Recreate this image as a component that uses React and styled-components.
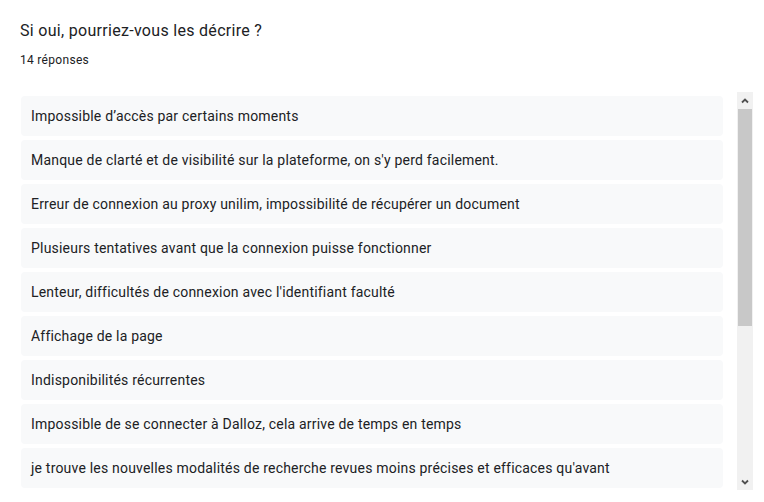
import React from "react";
import styled, { createGlobalStyle } from "styled-components";

const answers = [
  "Impossible d’accès par certains moments",
  "Manque de clarté et de visibilité sur la plateforme, on s'y perd facilement.",
  "Erreur de connexion au proxy unilim, impossibilité de récupérer un document",
  "Plusieurs tentatives avant que la connexion puisse fonctionner",
  "Lenteur, difficultés de connexion avec l'identifiant faculté",
  "Affichage de la page",
  "Indisponibilités récurrentes",
  "Impossible de se connecter à Dalloz, cela arrive de temps en temps",
  "je trouve les nouvelles modalités de recherche revues moins précises et efficaces qu'avant",
];

function Arrow({ down }) {
  return (
    <svg width="8" height="6" viewBox="0 0 8 6">
      <path
        d={down ? "M1 1.5 L4 4.5 L7 1.5" : "M1 4.5 L4 1.5 L7 4.5"}
        fill="none"
        stroke="#505050"
        strokeWidth="1.8"
      />
    </svg>
  );
}

function App() {
  return (
    <>
      <GlobalStyle />
      <Card>
        <Title>Si oui, pourriez-vous les décrire ?</Title>
        <Count>14 réponses</Count>
        <ScrollArea>
          <List>
            {answers.map((a, i) => (
              <Item key={i}>{a}</Item>
            ))}
          </List>
          <Scrollbar>
            <ScrollButton>
              <Arrow />
            </ScrollButton>
            <Track>
              <Thumb />
            </Track>
            <ScrollButton>
              <Arrow down />
            </ScrollButton>
          </Scrollbar>
        </ScrollArea>
      </Card>
    </>
  );
}

const GlobalStyle = createGlobalStyle`
  body {
    margin: 0;
    background: #fff;
    font-family: Roboto, "Liberation Sans", sans-serif;
    color: #202124;
  }
`;

const Card = styled.div`
  width: 764px;
  height: 502px;
  box-sizing: border-box;
  padding: 19px 11px 0 20px;
  background: #fff;
  overflow: hidden;
`;

const Title = styled.div`
  font: 400 16px/24px Roboto, "Liberation Sans", sans-serif;
  letter-spacing: 0.3px;
  color: #202124;
`;

const Count = styled.div`
  margin-top: 9px;
  font: 400 12px/16px Roboto, "Liberation Sans", sans-serif;
  letter-spacing: 0.3px;
  color: #202124;
`;

const ScrollArea = styled.div`
  display: flex;
  margin-top: 24px;
  margin-left: 1px;
  height: 398px;
  gap: 14px;
`;

const List = styled.div`
  flex: 1;
  display: flex;
  flex-direction: column;
  gap: 4px;
  padding-top: 4px;
  overflow: hidden;
`;

const Item = styled.div`
  flex-shrink: 0;
  height: 40px;
  box-sizing: border-box;
  display: flex;
  align-items: center;
  padding: 0 10px;
  background: #f8f9fa;
  border-radius: 4px;
  font: 400 14px/20px Roboto, "Liberation Sans", sans-serif;
  letter-spacing: 0.2px;
  color: #202124;
  white-space: nowrap;
`;

const Scrollbar = styled.div`
  width: 16px;
  display: flex;
  flex-direction: column;
  background: #f1f1f1;
`;

const ScrollButton = styled.div`
  height: 17px;
  display: flex;
  align-items: center;
  justify-content: center;
  flex-shrink: 0;
`;

const Track = styled.div`
  flex: 1;
  padding: 0 1px;
`;

const Thumb = styled.div`
  height: 217px;
  background: #c8c8c8;
`;

export default App;
